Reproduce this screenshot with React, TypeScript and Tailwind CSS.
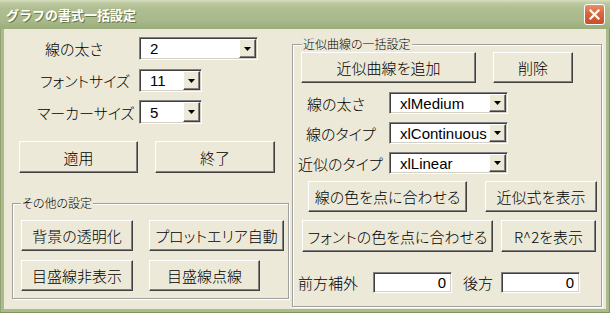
import React from "react";

const jp = "font-['Noto_Sans_CJK_JP',sans-serif] font-light [font-feature-settings:'palt']";
const lat = "font-['Liberation_Sans','Noto_Sans_CJK_JP',sans-serif]";
const raised =
  "border border-t-white border-l-white border-r-[#404040] border-b-[#404040] shadow-[inset_-1px_-1px_0_#808080]";
const sunken =
  "border border-t-[#808080] border-l-[#808080] border-r-white border-b-white shadow-[inset_1px_1px_0_#404040,inset_-1px_-1px_0_#d4d0c8]";
const etched =
  "border border-[#a0a0a0] shadow-[inset_1px_1px_0_#ffffff,1px_1px_0_#ffffff]";

function Btn({ className, children }: { className: string; children: React.ReactNode }) {
  return (
    <div
      className={`flex shrink-0 items-center justify-center bg-[#ece9d8] text-[15px] leading-none text-black ${jp} ${raised} ${className}`}
    >
      {children}
    </div>
  );
}

function Arrow() {
  return (
    <div className={`flex w-[17px] shrink-0 items-center justify-center bg-[#ece9d8] ${raised}`}>
      <svg width="7" height="4" viewBox="0 0 7 4">
        <path d="M0 0H7L3.5 4Z" fill="#000" />
      </svg>
    </div>
  );
}

function Combo({ className, value }: { className: string; value: string }) {
  return (
    <div className={`flex shrink-0 bg-white p-[1px] ${sunken} ${className}`}>
      <div className={`flex flex-1 items-center pl-[9px] text-[15px] leading-none text-black ${lat}`}>
        {value}
      </div>
      <Arrow />
    </div>
  );
}

function TextBox({ className, value }: { className: string; value: string }) {
  return (
    <div
      className={`flex shrink-0 items-center justify-end bg-white pr-[5px] text-[15px] leading-none text-black ${lat} ${sunken} ${className}`}
    >
      {value}
    </div>
  );
}

function Label({ className, children }: { className: string; children: React.ReactNode }) {
  return (
    <div className={`flex shrink-0 items-center text-[15px] leading-none text-black ${jp} ${className}`}>
      {children}
    </div>
  );
}

export default function App() {
  return (
    <div className="flex h-[313px] w-[610px] flex-col bg-[#a9bb8b] shadow-[inset_-1px_-1px_0_#7f9462,inset_1px_0_0_#8fa373]">
      {/* title bar */}
      <div className="flex h-[29px] shrink-0 items-center justify-between bg-[linear-gradient(to_bottom,#d6dfbf_0px,#bdcaa1_3px,#b0bf92_8px,#a9b98a_20px,#9cad7c_29px)] pl-[6px] pr-[5px]">
        <div
          className={`font-['Noto_Sans_CJK_JP',sans-serif] text-[13px] font-bold leading-none text-white [text-shadow:1px_1px_0_#68784a]`}
        >
          グラフの書式一括設定
        </div>
        <div className="flex h-[21px] w-[21px] items-center justify-center rounded-[3px] border border-white bg-[linear-gradient(to_bottom,#e8906c,#d8643c_45%,#c5502a)]">
          <svg width="11" height="11" viewBox="0 0 11 11">
            <path d="M1.5 1.5L9.5 9.5M9.5 1.5L1.5 9.5" stroke="#fff" strokeWidth="2.2" strokeLinecap="square" />
          </svg>
        </div>
      </div>

      {/* client */}
      <div className="mx-[4px] mb-[4px] flex flex-1 bg-[#ece9d8]">
        {/* left column */}
        <div className="flex w-[288px] shrink-0 flex-col">
          <div className="mt-[8px] flex">
            <Label className="w-[135px] pl-[41px]">線の太さ</Label>
            <Combo className="h-[23px] w-[119px]" value="2" />
          </div>
          <div className="mt-[9px] flex">
            <Label className="w-[135px] pl-[36px]">フォントサイズ</Label>
            <Combo className="h-[23px] w-[63px]" value="11" />
          </div>
          <div className="mt-[8px] flex">
            <Label className="w-[135px] pl-[33px]">マーカーサイズ</Label>
            <Combo className="h-[24px] w-[63px]" value="5" />
          </div>
          <div className="ml-[15px] mt-[17px] flex gap-[17px]">
            <Btn className="h-[32px] w-[119px]">適用</Btn>
            <Btn className="h-[32px] w-[120px]">終了</Btn>
          </div>

          <div className={`relative ml-[8px] mt-[30px] h-[96px] w-[277px] ${etched}`}>
            <div className={`absolute -top-[9px] left-[8px] bg-[#ece9d8] px-[1px] text-[12px] leading-[16px] text-black ${jp}`}>
              その他の設定
            </div>
            <div className="ml-[8px] mt-[16px] flex gap-[16px]">
              <Btn className="h-[31px] w-[112px]">背景の透明化</Btn>
              <Btn className="h-[31px] w-[135px]">プロットエリア自動</Btn>
            </div>
            <div className="ml-[8px] mt-[9px] flex gap-[16px]">
              <Btn className="h-[31px] w-[112px]">目盛線非表示</Btn>
              <Btn className="h-[31px] w-[111px]">目盛線点線</Btn>
            </div>
          </div>
        </div>

        {/* right frame */}
        <div className={`relative mt-[15px] h-[263px] w-[310px] shrink-0 ${etched}`}>
          <div className={`absolute -top-[9px] left-[9px] bg-[#ece9d8] px-[1px] text-[12px] leading-[16px] text-black ${jp}`}>
            近似曲線の一括設定
          </div>
          <div className="ml-[8px] mt-[7px] flex gap-[17px]">
            <Btn className="h-[31px] w-[175px]">近似曲線を追加</Btn>
            <Btn className="h-[31px] w-[80px]">削除</Btn>
          </div>
          <div className="mt-[9px] flex">
            <Label className="w-[96px] pl-[14px]">線の太さ</Label>
            <Combo className="h-[22px] w-[119px]" value="xlMedium" />
          </div>
          <div className="mt-[8px] flex">
            <Label className="w-[96px] pl-[13px]">線のタイプ</Label>
            <Combo className="h-[22px] w-[119px]" value="xlContinuous" />
          </div>
          <div className="mt-[8px] flex">
            <Label className="w-[96px] pl-[5px]">近似のタイプ</Label>
            <Combo className="h-[22px] w-[119px]" value="xlLinear" />
          </div>
          <div className="ml-[15px] mt-[7px] flex gap-[18px]">
            <Btn className="h-[31px] w-[159px]">線の色を点に合わせる</Btn>
            <Btn className="h-[31px] w-[112px]">近似式を表示</Btn>
          </div>
          <div className="ml-[9px] mt-[8px] flex gap-[8px]">
            <Btn className="h-[32px] w-[191px]">フォントの色を点に合わせる</Btn>
            <Btn className="h-[32px] w-[95px]">R^2を表示</Btn>
          </div>
          <div className="mt-[20px] flex">
            <Label className="w-[80px] pl-[5px]">前方補外</Label>
            <TextBox className="h-[21px] w-[79px]" value="0" />
            <Label className="ml-[11px] w-[38px]">後方</Label>
            <TextBox className="h-[21px] w-[79px]" value="0" />
          </div>
        </div>
      </div>
    </div>
  );
}
